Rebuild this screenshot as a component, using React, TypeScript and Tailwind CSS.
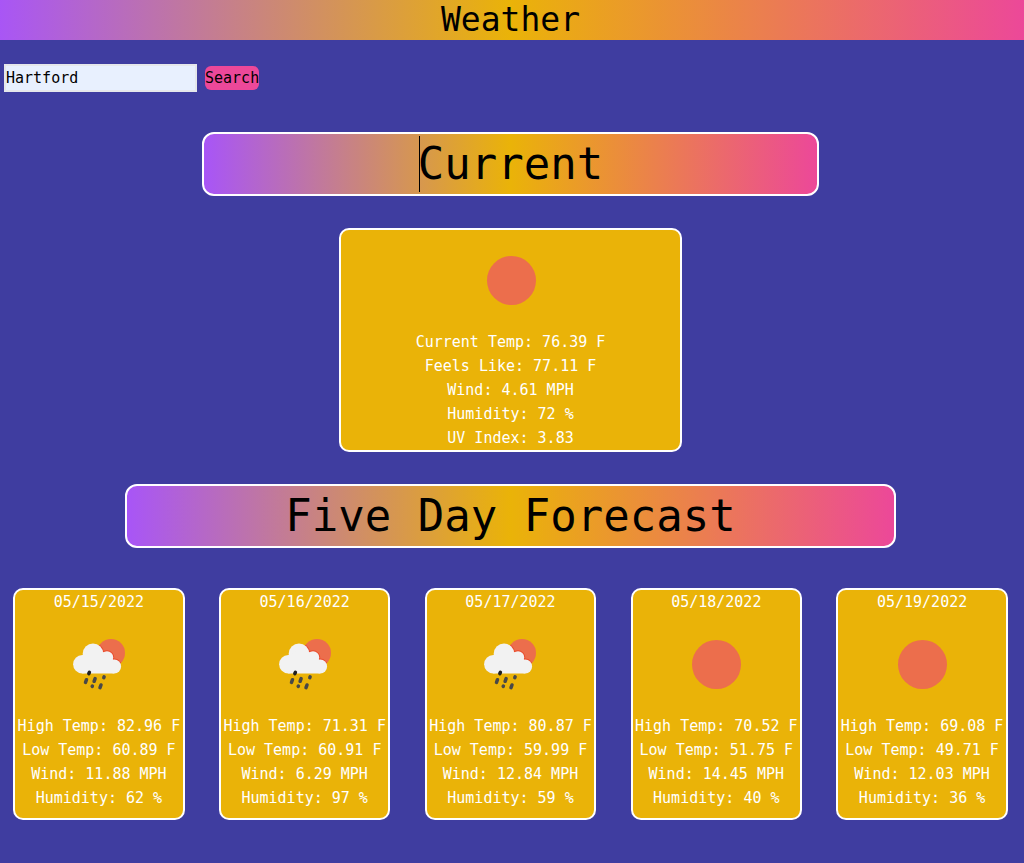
import type { ReactNode } from "react";

type Condition = "sun" | "rain";

interface Day {
  date: string;
  condition: Condition;
  high: string;
  low: string;
  wind: string;
  humidity: string;
}

const days: Day[] = [
  { date: "05/15/2022", condition: "rain", high: "82.96", low: "60.89", wind: "11.88", humidity: "62" },
  { date: "05/16/2022", condition: "rain", high: "71.31", low: "60.91", wind: "6.29", humidity: "97" },
  { date: "05/17/2022", condition: "rain", high: "80.87", low: "59.99", wind: "12.84", humidity: "59" },
  { date: "05/18/2022", condition: "sun", high: "70.52", low: "51.75", wind: "14.45", humidity: "40" },
  { date: "05/19/2022", condition: "sun", high: "69.08", low: "49.71", wind: "12.03", humidity: "36" },
];

function SunIcon() {
  return (
    <svg viewBox="0 0 100 100" className="size-[100px]" role="img" aria-label="Clear sky">
      <circle cx="50.5" cy="50.5" r="24.5" fill="#ec6e4c" />
    </svg>
  );
}

function RainIcon() {
  return (
    <svg viewBox="0 0 100 100" className="size-[100px]" role="img" aria-label="Rain">
      <defs>
        <clipPath id="rain-sun">
          <circle cx="62" cy="39" r="14" />
        </clipPath>
      </defs>
      <circle cx="62" cy="39" r="14" fill="#ec6e4c" />
      <g clipPath="url(#rain-sun)" fill="#ea4b2c">
        <circle cx="44" cy="39.5" r="11" />
        <circle cx="58" cy="43.5" r="7.2" />
        <circle cx="65.2" cy="52.5" r="7.9" />
      </g>
      <g fill="#f2f2f2">
        <circle cx="33.3" cy="50.2" r="9.2" />
        <circle cx="44" cy="39.8" r="10.3" />
        <circle cx="58" cy="43.5" r="6.2" />
        <circle cx="65.2" cy="52.5" r="6.9" />
        <path d="M33.3 41 L44 36 L58 39 L65.2 47 V59.4 H33.3 Z" />
      </g>
      <g stroke="#484848" strokeWidth="3.5" strokeLinecap="round">
        <path d="M40.4 58.4 L39.8 59.6" stroke="#202020" />
        <path d="M37.5 65.7 L36.5 68.4" />
        <path d="M46.1 64.6 L45.1 67.3" />
        <path d="M55.1 62.9 L54.8 63.7" />
        <path d="M43.4 72 L43.2 72.4" />
        <path d="M52 71 L51 73.7" />
      </g>
    </svg>
  );
}

function WeatherIcon({ condition }: { condition: Condition }) {
  return <div className="flex justify-center">{condition === "sun" ? <SunIcon /> : <RainIcon />}</div>;
}

function Banner({ className, children }: { className: string; children: ReactNode }) {
  return (
    <h2
      className={`mx-auto rounded-xl border-2 border-white bg-linear-to-r/srgb from-[#a855f7] via-[#eab308] to-[#ec4899] text-center text-[44px] leading-[60px] text-black ${className}`}
    >
      {children}
    </h2>
  );
}

export default function App() {
  return (
    <div className="min-h-screen overflow-hidden bg-[#3f3da0] font-['DejaVu_Sans_Mono',monospace] text-[15px] leading-6">
      <div className="-mr-px -ml-1">
        <header className="bg-linear-to-r/srgb from-[#a855f7] via-[#eab308] to-[#ec4899]">
          <h1 className="text-center text-[33px] leading-10 text-black">Weather</h1>
        </header>

        <form className="mt-6 flex items-center gap-2 pl-2" onSubmit={(e) => e.preventDefault()}>
          <input
            type="text"
            aria-label="City"
            defaultValue="Hartford"
            className="h-7 w-[193px] border-2 border-[#e5e7eb] bg-[#e8f0fe] text-black outline-none"
          />
          <button type="submit" className="rounded-md bg-[#ec4899] text-black">
            Search
          </button>
        </form>

        <main>
          <section>
            <Banner className="mt-10 w-3/5">
              <span className="relative">
                <span className="absolute -top-0.5 left-px h-14 w-px bg-black" aria-hidden="true" />
                Current
              </span>
            </Banner>
            <div className="mx-auto mt-8 w-1/3 rounded-[10px] border-2 border-white bg-[#eab308] text-center text-white">
              <WeatherIcon condition="sun" />
              <p>Current Temp: 76.39 F</p>
              <p>Feels Like: 77.11 F</p>
              <p>Wind: 4.61 MPH</p>
              <p>Humidity: 72 %</p>
              <p>UV Index: 3.83</p>
            </div>
          </section>

          <section>
            <Banner className="mt-8 w-3/4">Five Day Forecast</Banner>
            <div className="mt-10 mb-10 flex justify-around">
              {days.map((day) => (
                <article
                  key={day.date}
                  className="w-1/6 rounded-[10px] border-2 border-white bg-[#eab308] pb-2 text-center whitespace-nowrap text-white"
                >
                  <p>{day.date}</p>
                  <WeatherIcon condition={day.condition} />
                  <p>High Temp: {day.high} F</p>
                  <p>Low Temp: {day.low} F</p>
                  <p>Wind: {day.wind} MPH</p>
                  <p>Humidity: {day.humidity} %</p>
                </article>
              ))}
            </div>
          </section>
        </main>
      </div>
    </div>
  );
}
